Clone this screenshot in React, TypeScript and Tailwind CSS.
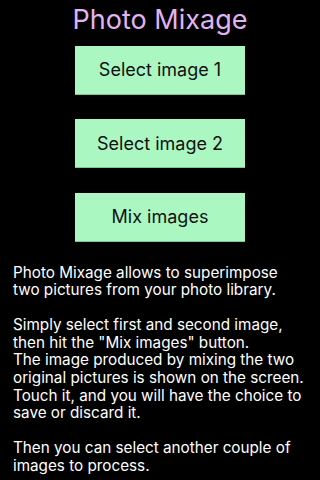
export default function App() {
  const buttons = ['Select image 1', 'Select image 2', 'Mix images'];

  return (
    <div className="flex h-[480px] w-[320px] flex-col overflow-hidden bg-black font-['Inter',sans-serif]">
      <h1 className="mt-[2px] text-center text-[27px] leading-[36px] text-[#e0b4f4]">Photo Mixage</h1>
      <div className="mt-[7.5px] flex flex-col items-center gap-[24.5px]">
        {buttons.map((label) => (
          <button
            key={label}
            type="button"
            className="flex h-[49px] w-[170px] items-center justify-center border-b border-[#7fc497] bg-[#abf7c1] text-[18px] text-[#111]"
          >
            {label}
          </button>
        ))}
      </div>
      <div className="mt-[22px] px-[13px] text-[15.25px] leading-[17.6px] text-white">
        <p>
          Photo Mixage allows to superimpose
          <br />
          two pictures from your photo library.
        </p>
        <p className="mt-[17.6px]">
          Simply select first and second image,
          <br />
          then hit the "Mix images" button.
          <br />
          The image produced by mixing the two
          <br />
          original pictures is shown on the screen.
          <br />
          Touch it, and you will have the choice to
          <br />
          save or discard it.
        </p>
        <p className="mt-[17.6px]">
          Then you can select another couple of
          <br />
          images to process.
        </p>
      </div>
    </div>
  );
}
